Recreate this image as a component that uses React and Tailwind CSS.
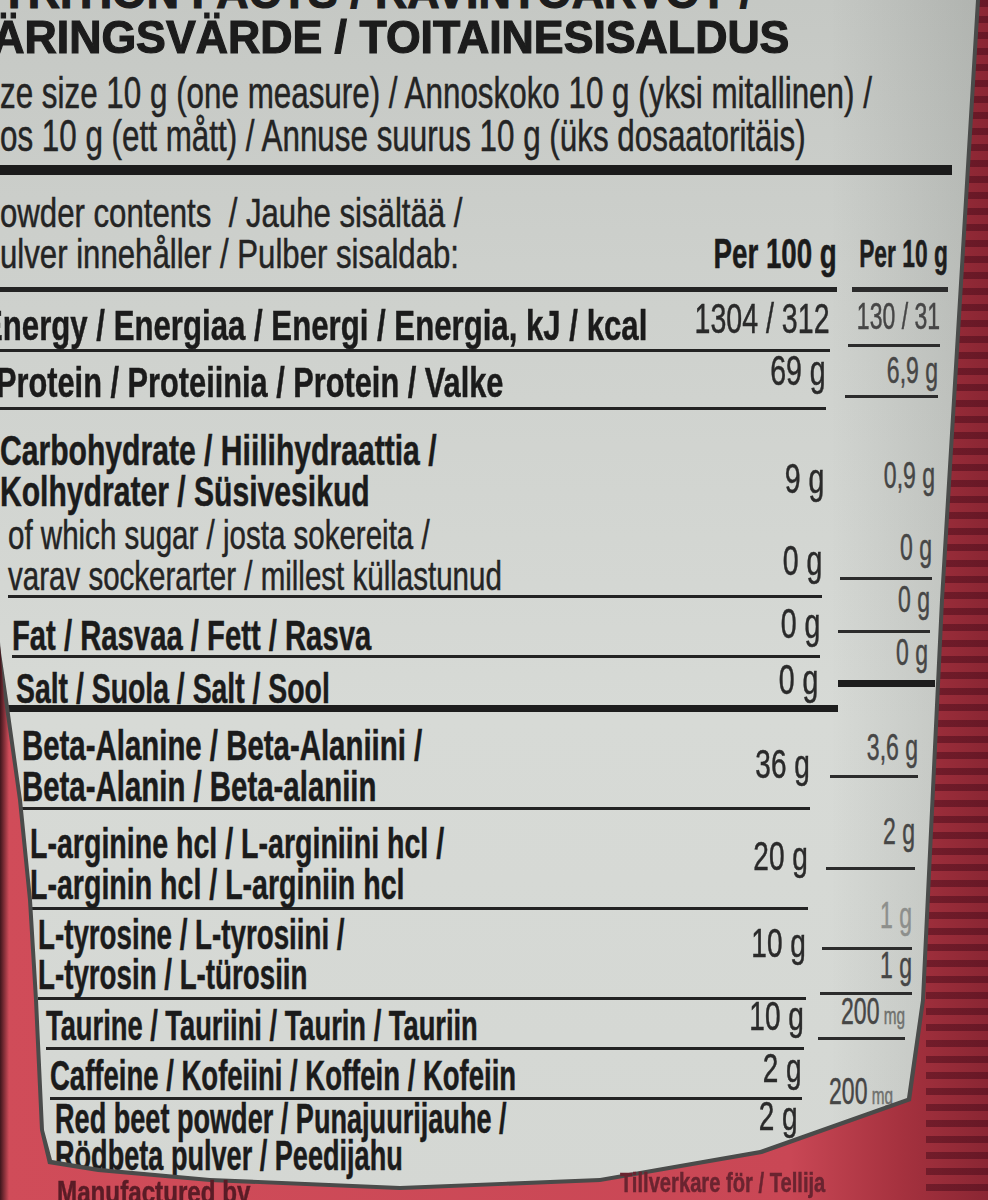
import React from 'react';

// label rows (label + per 100 g column)
const rows = [
  {
    box: 'h-[117px] mr-[1px] border-b-[5px]',
    pt: 'pt-[18px]',
    pb: 'pb-[13px]',
    txt: 'text-[41px] font-normal text-[#242424] scale-x-[0.76]',
    lines: ['owder contents  / Jauhe sisältää /', 'ulver innehåller / Pulber sisaldab:'],
    v: 'Per 100 g',
    vTxt: 'text-[42px] font-bold text-[#1b1b1b] scale-x-[0.66]',
  },
  {
    box: 'h-[60px] mr-[8px] border-b-[3px]',
    pt: 'pt-[13px]',
    pb: 'pb-[10px]',
    txt: 'text-[43px] font-bold text-[#1b1b1b] scale-x-[0.725]',
    shift: '-ml-[18px]',
    lines: ['Energy / Energiaa / Energi / Energia, kJ / kcal'],
    v: '1304 / 312',
    vTxt: 'text-[42px] text-[#2a2a2a] scale-x-[0.68]',
  },
  {
    box: 'h-[58px] mr-[12px] border-b-[3px]',
    pt: 'pt-[10px]',
    pb: 'pb-[16px]',
    txt: 'text-[43px] font-bold text-[#1b1b1b] scale-x-[0.715]',
    shift: '-ml-[4px]',
    lines: ['Protein / Proteiinia / Protein / Valke'],
    v: '69 g',
    vTxt: 'text-[42px] text-[#2a2a2a] scale-x-[0.68]',
  },
  {
    box: 'h-[105px] mr-[14px]',
    pt: 'pt-[20px]',
    pb: 'pb-[16px]',
    txt: 'text-[43px] font-bold text-[#1b1b1b] scale-x-[0.7]',
    lines: ['Carbohydrate / Hiilihydraattia /', 'Kolhydrater / Süsivesikud'],
    v: '9 g',
    vTxt: 'text-[42px] text-[#2a2a2a] scale-x-[0.68]',
  },
  {
    box: 'h-[83px] ml-[8px] mr-[16px] border-b-[3px]',
    pt: 'pt-0',
    pb: 'pb-[14px]',
    txt: 'text-[41px] font-normal text-[#242424] scale-x-[0.72]',
    lines: ['of which sugar / josta sokereita /', 'varav sockerarter / millest küllastunud'],
    v: '0 g',
    vTxt: 'text-[42px] text-[#2a2a2a] scale-x-[0.68]',
  },
  {
    box: 'h-[60px] ml-[12px] mr-[18px] border-b-[3px]',
    pt: 'pt-[17px]',
    pb: 'pb-[11px]',
    txt: 'text-[43px] font-bold text-[#1b1b1b] scale-x-[0.68]',
    lines: ['Fat / Rasvaa / Fett / Rasva'],
    v: '0 g',
    vTxt: 'text-[42px] text-[#2a2a2a] scale-x-[0.68]',
  },
  {
    box: 'h-[47px] ml-[16px] mr-[20px]',
    pt: 'pt-[10px]',
    pb: 'pb-[5px]',
    txt: 'text-[43px] font-bold text-[#1b1b1b] scale-x-[0.66]',
    lines: ['Salt / Suola / Salt / Sool'],
    v: '0 g',
    vTxt: 'text-[42px] text-[#2a2a2a] scale-x-[0.68]',
  },
  { rule: 'h-[7px] ml-[5px]' },
  {
    box: 'h-[98px] ml-[22px] mr-[28px] border-b-[3px]',
    pt: 'pt-[13px]',
    pb: 'pb-[23px]',
    txt: 'text-[42px] font-bold text-[#1b1b1b] scale-x-[0.7]',
    lines: ['Beta-Alanine / Beta-Alaniini /', 'Beta-Alanin / Beta-alaniin'],
    v: '36 g',
    vTxt: 'text-[40px] text-[#2a2a2a] scale-x-[0.7]',
  },
  {
    box: 'h-[100px] ml-[30px] mr-[30px] border-b-[3px]',
    pt: 'pt-[13px]',
    pb: 'pb-[31px]',
    txt: 'text-[42px] font-bold text-[#1b1b1b] scale-x-[0.68]',
    lines: ['L-arginine hcl / L-arginiini hcl /', 'L-arginin hcl / L-arginiin hcl'],
    v: '20 g',
    vTxt: 'text-[40px] text-[#2a2a2a] scale-x-[0.7]',
  },
  {
    box: 'h-[90px] ml-[38px] mr-[32px] border-b-[3px]',
    pt: 'pt-[5px]',
    pb: 'pb-[34px]',
    lh: 'leading-[40px]',
    txt: 'text-[42px] font-bold text-[#1b1b1b] scale-x-[0.66]',
    lines: ['L-tyrosine / L-tyrosiini /', 'L-tyrosin / L-türosiin'],
    v: '10 g',
    vTxt: 'text-[40px] text-[#2a2a2a] scale-x-[0.7]',
  },
  {
    box: 'h-[50px] ml-[46px] mr-[34px] border-b-[3px]',
    pt: 'pt-[5px]',
    pb: 'pb-[11px]',
    txt: 'text-[42px] font-bold text-[#1b1b1b] scale-x-[0.65]',
    lines: ['Taurine / Tauriini / Taurin / Tauriin'],
    v: '10 g',
    vTxt: 'text-[40px] text-[#2a2a2a] scale-x-[0.7]',
  },
  {
    box: 'h-[50px] ml-[50px] mr-[36px] border-b-[3px]',
    pt: 'pt-[5px]',
    pb: 'pb-[9px]',
    txt: 'text-[42px] font-bold text-[#1b1b1b] scale-x-[0.655]',
    lines: ['Caffeine / Kofeiini / Koffein / Kofeiin'],
    v: '2 g',
    vTxt: 'text-[40px] text-[#2a2a2a] scale-x-[0.7]',
  },
  {
    box: 'h-[80px] ml-[55px] mr-[40px]',
    pt: 'pt-0',
    pb: 'pb-[44px]',
    lh: 'leading-[37px]',
    txt: 'text-[42px] font-bold text-[#1b1b1b] scale-x-[0.645]',
    lines: ['Red beet powder / Punajuurijauhe /', 'Rödbeta pulver / Peedijahu'],
    v: '2 g',
    vTxt: 'text-[40px] text-[#2a2a2a] scale-x-[0.7]',
  },
];

// per 10 g column, drawn a little higher as the tub curves away
const per10 = [
  { box: 'h-[117px] ml-[14px] mr-[40px] border-b-[5px]', pb: 'pb-[13px]', v: 'Per 10 g', bold: true },
  { box: 'h-[55px] ml-[10px] mr-[48px] border-b-[3px]', pb: 'pb-[7px]', v: '130 / 31' },
  { box: 'h-[51px] ml-[7px] mr-[50px] border-b-[3px]', pb: 'pb-[4px]', v: '6,9 g' },
  { box: 'h-[102px] ml-[5px] mr-[53px]', pb: 'pb-[4px]', v: '0,9 g' },
  { box: 'h-[80px] ml-[2px] mr-[56px] border-b-[3px]', pb: 'pb-[9px]', v: '0 g' },
  { box: 'h-[53px] mr-[58px] border-b-[3px]', pb: 'pb-[10px]', v: '0 g' },
  { box: 'h-[47px] mr-[60px]', pb: 'pb-[7px]', v: '0 g' },
  { rule: 'h-[7px] mr-[53px]' },
  { box: 'h-[91px] -ml-[8px] mr-[70px] border-b-[3px]', pb: 'pb-[7px]', v: '3,6 g' },
  { box: 'h-[92px] -ml-[12px] mr-[73px] border-b-[3px]', pb: 'pb-[15px]', v: '2 g' },
  { box: 'h-[80px] -ml-[16px] mr-[76px] border-b-[3px]', pb: 'pb-[11px]', v: '1 g', faint: true },
  { box: 'h-[45px] -ml-[18px] mr-[76px] border-b-[3px]', pb: 'pb-[6px]', v: '1 g' },
  { box: 'h-[45px] -ml-[20px] mr-[83px] border-b-[3px]', pb: 'pb-[1px]', v: '200', mg: true },
  { box: 'h-[80px] -ml-[20px] mr-[95px]', pb: 'pb-[4px]', v: '200', mg: true },
];

function LabelRow({ r }) {
  if (r.rule) return <div className={`${r.rule} bg-[#1d1d1d]`} />;
  return (
    <div className={`${r.box} border-[#232323] flex`}>
      <div className={`flex-1 min-w-0 self-start ${r.pt}`}>
        {r.lines.map((l, i) => (
          <div
            key={i}
            className={`w-max origin-left whitespace-pre ${r.lh || 'leading-[41px]'} ${r.txt} ${i === 0 && r.shift ? r.shift : ''}`}
          >
            {l}
          </div>
        ))}
      </div>
      <div className={`shrink-0 self-end ${r.pb}`}>
        <div className={`w-max origin-right whitespace-nowrap leading-[40px] ${r.vTxt}`}>{r.v}</div>
      </div>
    </div>
  );
}

function Per10Cell({ c }) {
  if (c.rule) return <div className={`${c.rule} bg-[#1d1d1d]`} />;
  const tone = c.bold
    ? 'font-bold text-[#1e1e1e] text-[38px] scale-x-[0.6]'
    : c.faint
      ? 'text-[#8d8f8c] text-[36px] scale-x-[0.64]'
      : 'text-[#464646] text-[36px] scale-x-[0.64]';
  return (
    <div className={`${c.box} border-[#2c2c2c] flex items-end justify-end`}>
      <div className={c.pb}>
        <div className={`w-max origin-right whitespace-nowrap leading-[40px] ${tone}`}>
          {c.v}
          {c.mg && <span className="text-[24px] text-[#6f716e]"> mg</span>}
        </div>
      </div>
    </div>
  );
}

export default function App() {
  return (
    <div className="w-[988px] h-[1200px] overflow-hidden flex flex-col [font-family:'Liberation_Sans',Arial,sans-serif] [-webkit-text-stroke:0.5px_currentColor] [background:linear-gradient(to_right,rgba(25,8,12,0.8)_0px,rgba(25,8,12,0)_9px),repeating-linear-gradient(180deg,rgba(70,10,25,0.5)_0px,rgba(70,10,25,0.5)_7px,rgba(0,0,0,0)_7px,rgba(0,0,0,0)_16px)_right_top/62px_100%_no-repeat,linear-gradient(to_right,#d04c59_0%,#c94755_80%,#a6323f_91%,#8a2633_100%)]">
      {/* label outline */}
      <div className="h-[1200px] shrink-0 bg-[#4a4b4a] [clip-path:polygon(0_0,980px_0,944px_600px,925px_1000px,911px_1101px,762px_1154px,600px_1182px,400px_1190px,210px_1182px,98px_1172px,48px_1164px,40px_1130px,34px_1000px,28px_900px,18px_800px,4px_700px,0_642px)]">
        <div className="h-full flex flex-col [clip-path:polygon(0_0,976px_0,940px_600px,921px_1000px,907px_1098px,760px_1150px,600px_1178px,400px_1186px,210px_1178px,100px_1168px,52px_1160px,44px_1130px,38px_1000px,32px_900px,22px_800px,8px_700px,0_646px)] [background:linear-gradient(to_right,rgba(0,0,0,0)_84%,rgba(40,45,40,0.14)_100%),linear-gradient(180deg,#c5c8c4_0%,#cdd0cc_22%,#d7dad6_60%,#d4d7d3_100%)] blur-[0.4px]">
          {/* cut-off first title line */}
          <div className="h-[12px] overflow-hidden">
            <div className="-mt-[28px] -ml-[64px] w-max origin-left scale-x-[0.95] whitespace-nowrap text-[47px] leading-[40px] font-bold text-[#1c1c1c] [-webkit-text-stroke:1.2px_#1c1c1c]">
              NUTRITION FACTS / RAVINTOARVOT /
            </div>
          </div>
          <div className="h-[50px]">
            <div className="-ml-[40px] w-max origin-left scale-x-[0.95] whitespace-nowrap text-[47px] leading-[50px] font-bold text-[#1c1c1c] [-webkit-text-stroke:1.2px_#1c1c1c]">
              NÄRINGSVÄRDE / TOITAINESISALDUS
            </div>
          </div>
          <div className="mt-[9px] h-[43px]">
            <div className="w-max origin-left scale-x-[0.713] whitespace-nowrap text-[44px] leading-[43px] text-[#242424]">
              ze size 10 g (one measure) / Annoskoko 10 g (yksi mitallinen) /
            </div>
          </div>
          <div className="h-[43px]">
            <div className="w-max origin-left scale-x-[0.713] whitespace-nowrap text-[44px] leading-[43px] text-[#242424]">
              os 10 g (ett mått) / Annuse suurus 10 g (üks dosaatoritäis)
            </div>
          </div>
          <div className="mt-[8px] h-[10px] mr-[36px] bg-[#1b1b1b]" />

          <div className="flex">
            <div className="w-[838px] shrink-0 flex flex-col">
              {rows.map((r, i) => (
                <LabelRow key={i} r={r} />
              ))}
            </div>
            <div className="flex-1 min-w-0 flex flex-col">
              {per10.map((c, i) => (
                <Per10Cell key={i} c={c} />
              ))}
            </div>
          </div>
        </div>
      </div>

      {/* red band under the label */}
      <div className="relative -mt-[34px] h-[34px] flex items-start font-bold text-[#5a1c26] blur-[0.6px]">
        <div className="ml-[57px] mt-[10px] w-max origin-left scale-x-[0.78] whitespace-nowrap text-[31px] leading-[34px]">
          Manufactured by
        </div>
        <div className="ml-auto mr-[163px] mt-[2px] w-max origin-right scale-x-[0.72] whitespace-nowrap text-[28px] leading-[30px] text-[#6a2430]">
          Tillverkare för / Tellija
        </div>
      </div>
    </div>
  );
}
